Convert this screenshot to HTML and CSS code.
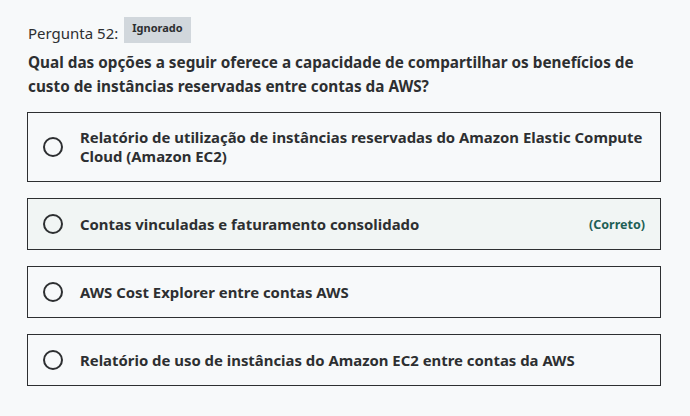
FILE: index.html
```html
<!DOCTYPE html>
<html lang="pt">
<head>
<meta charset="utf-8">
<link rel="stylesheet" href="styles.css">
</head>
<body>
<div class="page">
  <div class="q-head">
    <span class="q-num">Pergunta 52:</span>
    <span class="badge">Ignorado</span>
  </div>
  <p class="q-text">Qual das opções a seguir oferece a capacidade de compartilhar os benefícios de custo de instâncias reservadas entre contas da AWS?</p>
  <ul class="options">
    <li class="option">
      <span class="radio"></span>
      <span class="opt-text">Relatório de utilização de instâncias reservadas do Amazon Elastic Compute Cloud (Amazon EC2)</span>
    </li>
    <li class="option correct">
      <span class="radio"></span>
      <span class="opt-text">Contas vinculadas e faturamento consolidado</span>
      <span class="tag">(Correto)</span>
    </li>
    <li class="option">
      <span class="radio"></span>
      <span class="opt-text">AWS Cost Explorer entre contas AWS</span>
    </li>
    <li class="option">
      <span class="radio"></span>
      <span class="opt-text">Relatório de uso de instâncias do Amazon EC2 entre contas da AWS</span>
    </li>
  </ul>
</div>
</body>
</html>
```
FILE: styles.css
```css
html, body {
  margin: 0;
  padding: 0;
  background: #f7f9fa;
}
body {
  font-family: "Noto Sans", "Liberation Sans", sans-serif;
  color: #2d2f31;
}
.page {
  padding: 17px 29px 0 27px;
}
.q-head {
  display: flex;
  align-items: flex-start;
  gap: 6px;
}
.q-num {
  font-size: 15px;
  line-height: 20px;
  padding-top: 6px;
  padding-left: 1px;
}
.badge {
  background: #d1d7dc;
  font-size: 11px;
  font-weight: 700;
  line-height: 14px;
  padding: 4px 8px 8px;
}
.q-text {
  margin: 7px 0 0 1px;
  font-size: 15.3px;
  font-weight: 700;
  line-height: 24px;
}
.options {
  list-style: none;
  margin: 14px 0 0;
  padding: 0;
  display: flex;
  flex-direction: column;
  gap: 16px;
}
.option {
  display: flex;
  align-items: center;
  gap: 17px;
  border: 1px solid #2d2f31;
  padding: 15px;
}
.option.correct {
  background: #f1f5f4;
}
.radio {
  flex: none;
  width: 16px;
  height: 16px;
  border: 2px solid #2d2f31;
  border-radius: 50%;
}
.opt-text {
  flex: 1;
  font-size: 14.9px;
  font-weight: 700;
  line-height: 19px;
}
.tag {
  font-size: 12.5px;
  font-weight: 700;
  color: #1e6055;
}
```
